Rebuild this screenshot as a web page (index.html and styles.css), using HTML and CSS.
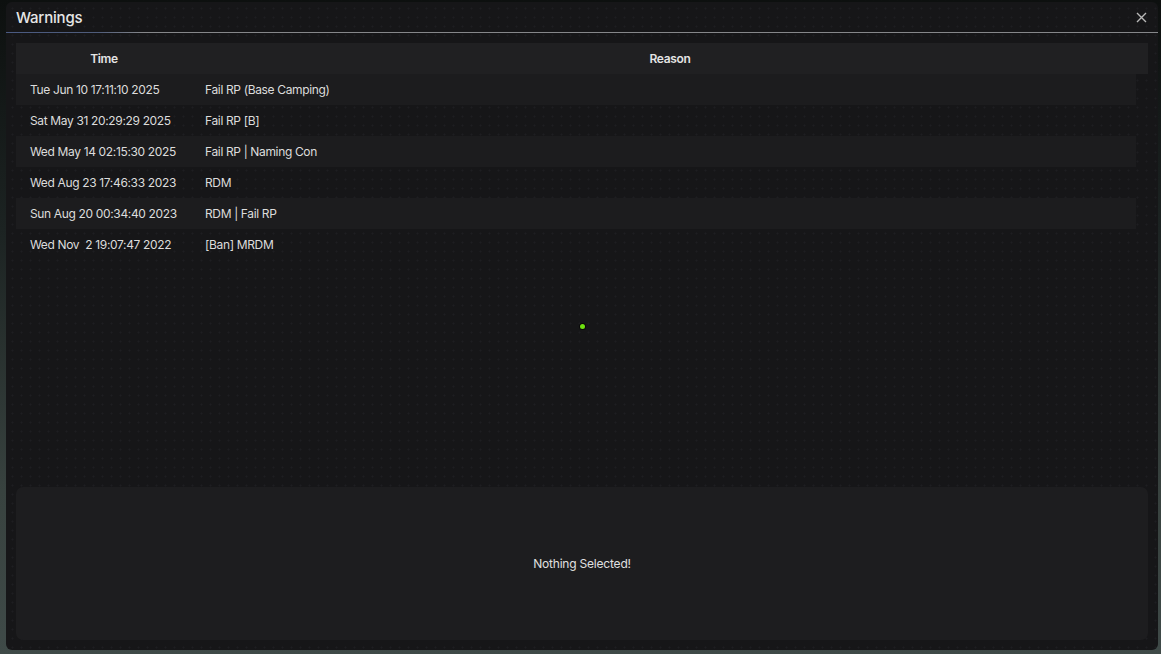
FILE: index.html
```html
<!DOCTYPE html>
<html lang="en">
<head>
  <meta charset="UTF-8">
  <title>Warnings</title>
  <link rel="stylesheet" href="styles.css">
</head>
<body>
  <div class="backdrop">
    <div class="window">
      <div class="titlebar">
        <span class="title">Warnings</span>
        <button class="close" aria-label="Close">
          <svg width="11" height="11" viewBox="0 0 11 11"><path d="M1 1L10 10M10 1L1 10" stroke="#b8b8b8" stroke-width="1.4" fill="none"/></svg>
        </button>
      </div>

      <div class="content">
        <div class="list">
          <div class="thead">
            <div class="col-time">Time</div>
            <div class="col-reason">Reason</div>
          </div>
          <div class="row stripe"><div class="c-time">Tue Jun 10 17:11:10 2025</div><div class="c-reason">Fail RP (Base Camping)</div></div>
          <div class="row"><div class="c-time">Sat May 31 20:29:29 2025</div><div class="c-reason">Fail RP [B]</div></div>
          <div class="row stripe"><div class="c-time">Wed May 14 02:15:30 2025</div><div class="c-reason">Fail RP | Naming Con</div></div>
          <div class="row"><div class="c-time">Wed Aug 23 17:46:33 2023</div><div class="c-reason">RDM</div></div>
          <div class="row stripe"><div class="c-time">Sun Aug 20 00:34:40 2023</div><div class="c-reason">RDM | Fail RP</div></div>
          <div class="row"><div class="c-time">Wed Nov&nbsp; 2 19:07:47 2022</div><div class="c-reason">[Ban] MRDM</div></div>
          <span class="cursor-dot"></span>
        </div>

        <div class="details">Nothing Selected!</div>
      </div>
    </div>
  </div>
</body>
</html>
```

FILE: styles.css
```css
*, *::before, *::after {
  box-sizing: border-box;
}
html, body {
  margin: 0;
  height: 100%;
}
body {
  font-family: Inter, "Noto Sans", sans-serif;
  color: #e2e2e2;
  background: linear-gradient(180deg, #0d100f 0%, #1c2322 35%, #38423f 75%, #3f4a48 100%);
}
.backdrop {
  height: 100%;
  padding: 2px 3px 4px 6px;
}
/* Main dialog */
.window {
  height: 100%;
  display: flex;
  flex-direction: column;
  background-color: #161618;
  background-image: radial-gradient(circle, #1e1e21 0.9px, transparent 1.1px);
  background-size: 9px 9px;
  background-position: 2px 2px;
  border-radius: 6px;
}
.titlebar {
  height: 31px;
  display: flex;
  align-items: center;
  justify-content: space-between;
  padding: 0 10px 0 10px;
  border-bottom: 1px solid #7d7f82;
  border-image: linear-gradient(90deg, #4a5a82 0%, #4f5c7a 8%, #86878a 12%, #86878a 100%) 1;
}
.title {
  font-size: 15px;
  font-weight: 500;
  color: #e6e6e6;
  letter-spacing: -0.2px;
}
.close {
  background: none;
  border: 0;
  padding: 0;
  width: 14px;
  height: 14px;
  display: flex;
  align-items: center;
  justify-content: center;
  cursor: pointer;
}
.content {
  flex: 1;
  display: flex;
  flex-direction: column;
  padding: 10px;
  gap: 9px;
}
/* Warnings list */
.list {
  position: relative;
  flex: 1;
  font-size: 12px;
  letter-spacing: -0.35px;
}
.thead {
  display: flex;
  height: 31px;
  align-items: center;
  background: #202022;
  font-weight: 600;
  color: #e4e4e4;
}
.col-time {
  width: 176px;
  text-align: center;
}
.col-reason {
  flex: 1;
  text-align: center;
}
.row {
  display: flex;
  height: 31px;
  align-items: center;
  margin-right: 12px;
  color: #dcdcdc;
}
.row.stripe {
  background: #1c1c1e;
}
.c-time {
  width: 176px;
  padding-left: 14px;
  white-space: pre;
}
.c-reason {
  flex: 1;
  padding-left: 13px;
}
.cursor-dot {
  position: absolute;
  left: 564px;
  top: 281px;
  width: 5px;
  height: 5px;
  border-radius: 50%;
  background: #6fe010;
  box-shadow: 0 0 0 1px #0a0a0a;
}
/* Selected warning details */
.details {
  height: 153px;
  display: flex;
  align-items: center;
  justify-content: center;
  background: #1d1d1f;
  border-radius: 7px;
  font-size: 12px;
  letter-spacing: -0.2px;
  color: #e0e0e0;
}
```
